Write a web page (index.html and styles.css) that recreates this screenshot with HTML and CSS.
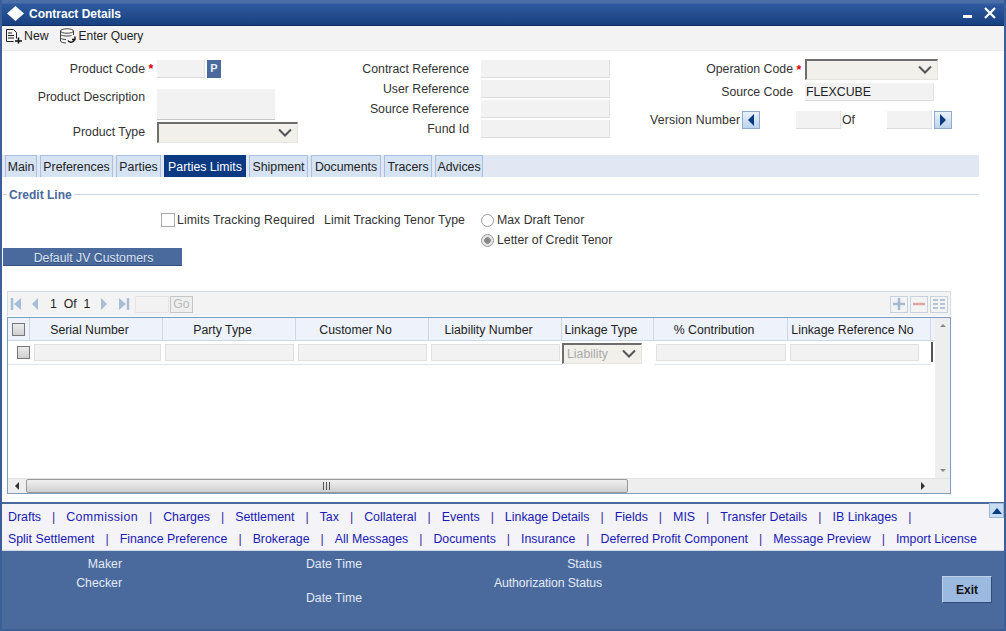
FILE: index.html
```html
<!DOCTYPE html>
<html lang="en">
<head>
<meta charset="utf-8">
<title>Contract Details</title>
<link rel="stylesheet" href="styles.css">
</head>
<body>
<div class="window">
  <header class="titlebar">
    <svg class="logo" width="17" height="15" viewBox="0 0 17 15"><path d="M8.500 0l8.500 7.500-8.500 7.500-8.500-7.500z" fill="#fff"/></svg>
    <span class="title">Contract Details</span>
    <svg class="winbtn min" width="12" height="12" viewBox="0 0 12 12"><rect x="1" y="8" width="9" height="3" fill="#fff"/></svg>
    <svg class="winbtn" width="14" height="14" viewBox="0 0 14 14"><path d="M2 2l10 10M12 2L2 12" stroke="#fff" stroke-width="2.2" fill="none"/></svg>
  </header>
  <nav class="toolbar">
    <span class="tool">
      <svg width="18" height="16" viewBox="0 0 18 16"><path d="M2.500 1.500h7l3 3v6" fill="none" stroke="#222"/><path d="M2.500 1.500v12h7" fill="none" stroke="#222"/><path d="M4 5h4M4 7.500h6M4 10h6" stroke="#222"/><path d="M14.500 9.500v6M11 13h7" stroke="#111" stroke-width="1.600"/></svg>
      New
    </span>
    <span class="tool query">
      <svg width="18" height="16" viewBox="0 0 18 16"><ellipse cx="8" cy="3" rx="6.500" ry="2.200" fill="#fff" stroke="#444"/><path d="M1.500 3v10c0 1 3 2 5.500 2M14.500 3v4M1.500 6.500c1 1.500 8 2 11 1M1.500 10c1 1 3 1.500 5.500 1.500" fill="none" stroke="#444"/><path d="M9 12.500a3.500 3.500 0 0 0 6.500-1.500M16 8.500v3h-3" fill="none" stroke="#111" stroke-width="1.400"/></svg>
      Enter Query
    </span>
  </nav>

  <section class="head">
    <div class="col-product">
      <label class="lbl">Product Code</label>
      <span class="req">*</span>
      <span class="prod-code"><span class="inp w48"></span><span class="pbtn">P</span></span>
      <label class="lbl lbl-desc">Product Description</label>
      <span></span>
      <span class="inp desc"></span>
      <label class="lbl lbl-type">Product Type</label>
      <span></span>
      <span class="select w141"><svg class="chev" width="16" height="10" viewBox="0 0 16 10"><path d="M2 1.500l6 6 6-6" fill="none" stroke="#555" stroke-width="2"/></svg></span>
    </div>
    <div class="col-ref">
      <label class="lbl">Contract Reference</label><span class="inp"></span>
      <label class="lbl">User Reference</label><span class="inp"></span>
      <label class="lbl">Source Reference</label><span class="inp"></span>
      <label class="lbl">Fund Id</label><span class="inp"></span>
    </div>
    <div class="col-op">
      <div class="op-row">
        <label class="lbl op-lbl">Operation Code</label><span class="req">*</span>
        <span class="select w133"><svg class="chev" width="16" height="10" viewBox="0 0 16 10"><path d="M2 1.500l6 6 6-6" fill="none" stroke="#555" stroke-width="2"/></svg></span>
      </div>
      <div class="op-row src">
        <label class="lbl">Source Code</label><span></span>
        <span class="inp w129 val">FLEXCUBE</span>
      </div>
      <div class="ver-row">
        <label class="lbl ver">Version Number</label>
        <span class="navbtn"><svg width="10" height="14" viewBox="0 0 10 14"><path d="M8 1v12L2 7z" fill="#0a3a80"/></svg></span>
        <span class="inp w45 ml36"></span>
        <span class="of">Of</span>
        <span class="inp w45 ml31"></span>
        <span class="navbtn ml2"><svg width="10" height="14" viewBox="0 0 10 14"><path d="M2 1v12l6-6z" fill="#0a3a80"/></svg></span>
      </div>
    </div>
  </section>

  <div class="tabs">
    <span class="tab">Main</span>
    <span class="tab">Preferences</span>
    <span class="tab">Parties</span>
    <span class="tab active">Parties Limits</span>
    <span class="tab">Shipment</span>
    <span class="tab">Documents</span>
    <span class="tab">Tracers</span>
    <span class="tab">Advices</span>
  </div>

  <main class="body">
    <div class="legend"><span class="legend-text">Credit Line</span></div>
    <div class="tracking">
      <span class="check"></span>
      <span class="txt ltr">Limits Tracking Required</span>
      <span class="txt lttt">Limit Tracking Tenor Type</span>
      <div class="radios">
        <div class="radio-row"><span class="radio"></span><span class="txt">Max Draft Tenor</span></div>
        <div class="radio-row"><span class="radio on"></span><span class="txt">Letter of Credit Tenor</span></div>
      </div>
    </div>
    <button class="jv" type="button">Default JV Customers</button>

    <div class="panel">
      <div class="pager">
        <svg width="12" height="12" viewBox="0 0 12 12"><path d="M2 0v12" stroke="#a9bcd6" stroke-width="2.500"/><path d="M11 0v12L4 6z" fill="#a9bcd6"/></svg>
        <svg class="pg-prev" width="8" height="12" viewBox="0 0 8 12"><path d="M7 0v12L1 6z" fill="#a9bcd6"/></svg>
        <span class="pg-text">1&nbsp; Of&nbsp; 1</span>
        <svg class="pg-next" width="8" height="12" viewBox="0 0 8 12"><path d="M1 0v12l6-6z" fill="#a9bcd6"/></svg>
        <svg class="pg-last" width="12" height="12" viewBox="0 0 12 12"><path d="M1 0v12l7-6z" fill="#a9bcd6"/><path d="M10 0v12" stroke="#a9bcd6" stroke-width="2.500"/></svg>
        <span class="inp pg-inp"></span>
        <span class="go">Go</span>
        <span class="pg-tools">
          <span class="ptool"><svg width="14" height="14" viewBox="0 0 14 14"><path d="M7 1v12M1 7h12" stroke="#a5b9d3" stroke-width="2.500"/></svg></span>
          <span class="ptool"><svg width="14" height="14" viewBox="0 0 14 14"><path d="M1 7h12" stroke="#e0a6a6" stroke-width="2.500"/></svg></span>
          <span class="ptool"><svg width="14" height="14" viewBox="0 0 14 14"><path d="M1 2h5v2H1zM8 2h5v2H8zM1 6h5v2H1zM8 6h5v2H8zM1 10h5v2H1zM8 10h5v2H8z" fill="#b6c4d8"/></svg></span>
        </span>
      </div>
      <div class="table-wrap">
        <div class="table-main">
          <div class="thead">
            <span class="th c0"><span class="check grey"></span></span>
            <span class="th c1">Serial Number</span>
            <span class="th c2">Party Type</span>
            <span class="th c3">Customer No</span>
            <span class="th c4">Liability Number</span>
            <span class="th c5">Linkage Type</span>
            <span class="th c6">% Contribution</span>
            <span class="th c7">Linkage Reference No</span>
          </div>
          <div class="trow">
            <span class="td c0"><span class="check grey"></span></span>
            <span class="td c1"><span class="inp cell"></span></span>
            <span class="td c2"><span class="inp cell"></span></span>
            <span class="td c3"><span class="inp cell"></span></span>
            <span class="td c4"><span class="inp cell"></span></span>
            <span class="td c5"><span class="select cell-select">Liability<svg class="chev" width="16" height="10" viewBox="0 0 16 10"><path d="M2 1.500l6 6 6-6" fill="none" stroke="#555" stroke-width="2"/></svg></span></span>
            <span class="td c6"><span class="inp cell"></span></span>
            <span class="td c7"><span class="inp cell"></span></span>
            <span class="td c8"></span>
          </div>
        </div>
        <div class="vscroll">
          <svg width="16" height="16" viewBox="0 0 16 16"><path d="M5 9l3-3 3 3z" fill="#888"/></svg>
          <svg width="16" height="16" viewBox="0 0 16 16"><path d="M5 7l3 3 3-3z" fill="#888"/></svg>
        </div>
        <div class="hscroll">
          <span class="harrow"><svg width="8" height="10" viewBox="0 0 8 10"><path d="M6 1v8L2 5z" fill="#333"/></svg></span>
          <span class="hthumb"><svg width="10" height="8" viewBox="0 0 10 8"><path d="M1.500 0v8M4.500 0v8M7.500 0v8" stroke="#555"/></svg></span>
          <span class="harrow end"><svg width="8" height="10" viewBox="0 0 8 10"><path d="M2 1v8l4-4z" fill="#333"/></svg></span>
        </div>
      </div>
    </div>
  </main>

  <section class="links">
    <div class="link-row first">
      <a>Drafts</a><i>|</i><a class="wide">Commission</a><i>|</i><a>Charges</a><i>|</i><a>Settlement</a><i>|</i><a>Tax</a><i>|</i><a>Collateral</a><i>|</i><a>Events</a><i>|</i><a>Linkage Details</a><i>|</i><a>Fields</a><i>|</i><a>MIS</a><i>|</i><a>Transfer Details</a><i>|</i><a>IB Linkages</a><i>|</i>
    </div>
    <div class="link-row">
      <a>Split Settlement</a><i>|</i><a>Finance Preference</a><i>|</i><a>Brokerage</a><i>|</i><a>All Messages</a><i>|</i><a>Documents</a><i>|</i><a>Insurance</a><i>|</i><a>Deferred Profit Component</a><i>|</i><a>Message Preview</a><i>|</i><a>Import License</a>
    </div>
    <span class="collapse"><svg width="12" height="8" viewBox="0 0 12 8"><path d="M6 1l5 6H1z" fill="#0a3a80"/></svg></span>
  </section>

  <footer class="footer">
    <div class="audit">
      <span class="a-maker">Maker</span>
      <span class="a-dt1">Date Time</span>
      <span class="a-status">Status</span>
      <span class="a-checker">Checker</span>
      <span class="a-auth">Authorization Status</span>
      <span class="a-dt2">Date Time</span>
    </div>
    <button class="exit" type="button">Exit</button>
  </footer>
</div>
</body>
</html>
```
FILE: styles.css
```css
* { box-sizing: border-box; }
html, body { margin: 0; padding: 0; }
body {
  width: 1006px;
  height: 631px;
  overflow: hidden;
  background: #fff;
  font-family: "Liberation Sans", Arial, sans-serif;
  font-size: 12.3px;
  color: #333;
}
.window {
  width: 1006px;
  height: 631px;
  display: flex;
  flex-direction: column;
  border-left: 2px solid #3d5f97;
  border-right: 2px solid #3d5f97;
  border-bottom: 2px solid #3d5f97;
}
.titlebar {
  height: 26px;
  flex: none;
  display: flex;
  align-items: center;
  padding: 2px 7px 0 5px;
  background: linear-gradient(#4a6ea8 0, #4a6ea8 3px, #2f5a9f 4px, #17407f 100%);
  border-bottom: 1px solid #0f2f63;
  color: #fff;
}
.logo { flex: none; margin-top: -1px; }
.title { margin-left: 5px; font-size: 12px; font-weight: bold; color: #fff; flex: 1; }
.winbtn { flex: none; margin-top: -2px; }
.winbtn.min { margin-right: 9px; }
.toolbar {
  height: 25px;
  flex: none;
  display: flex;
  align-items: center;
  gap: 10px;
  padding: 0 0 4px 2px;
  background: #f3f3f3;
  border-bottom: 1px solid #ececec;
  color: #222;
}
.tool { display: flex; align-items: center; gap: 2px; }
.tool.query { font-size: 12px; }

.head {
  height: 104px;
  flex: none;
  display: flex;
  padding-top: 9px;
}
.lbl { text-align: right; color: #333; white-space: nowrap; line-height: 18px; }
.req { color: #d00; font-weight: bold; }
.inp {
  display: block;
  height: 18px;
  background: #f2f2f2;
  border-bottom: 1px solid #dcdcdc;
  border-right: 1px solid #e2e2e2;
  color: #222;
}
.select {
  display: flex;
  align-items: center;
  justify-content: flex-end;
  height: 21px;
  background: #f1f0ea;
  border-top: 2px solid #6d6d6d;
  border-left: 2px solid #6d6d6d;
  border-right: 1px solid #e4e4e0;
  border-bottom: 1px solid #e4e4e0;
  padding-right: 4px;
}
.chev { flex: none; }

.col-product {
  width: 296px;
  display: grid;
  grid-template-columns: 143px 12px 1fr;
  grid-template-rows: 29px 33px 21px;
  align-items: start;
  justify-items: start;
}
.col-product .lbl { justify-self: end; }
.col-product .req { justify-self: center; line-height: 18px; }
.col-product .lbl-desc { line-height: 16px; }
.col-product .lbl-type { line-height: 20px; }
.prod-code { display: flex; gap: 2px; align-items: center; }
.w48 { width: 48px; }
.pbtn {
  width: 14px;
  height: 18px;
  background: #4a6a9e;
  color: #e8eef8;
  font-weight: bold;
  font-size: 11px;
  text-align: center;
  line-height: 17px;
}
.desc { width: 118px; height: 31px; border-right: 0; border-bottom: 1px solid #c8c8c8; }
.w141 { width: 141px; }

.col-ref {
  width: 312px;
  display: grid;
  grid-template-columns: 171px 129px;
  column-gap: 12px;
  grid-auto-rows: 18px;
  row-gap: 2px;
  align-items: center;
  align-content: start;
}
.col-op { width: 340px; margin-left: 40px; margin-top: -1px; }
.op-row { display: grid; grid-template-columns: 143px 12px auto; align-items: center; height: 21px; justify-content: start; }
.op-row .req { justify-self: center; }
.op-lbl { line-height: 19px; }
.op-row.src { margin-top: 3px; height: 18px; }
.w133 { width: 133px; }
.w129 { width: 129px; }
.val { padding-left: 1px; line-height: 18px; color: #222; }
.ver-row { display: flex; align-items: center; height: 18px; margin-top: 10px; }
.ver { color: #333; width: 90px; letter-spacing: .15px; line-height: 20px; }
.navbtn {
  width: 18px;
  height: 18px;
  margin-left: 2px;
  background: linear-gradient(#eaf2fb, #bcd3ec);
  border: 1px solid #8fabcc;
  display: flex;
  align-items: center;
  justify-content: center;
}
.w45 { width: 45px; }
.ml36 { margin-left: 36px; }
.of { width: 16px; margin-left: 1px; line-height: 20px; }
.ml31 { margin-left: 29px; }
.ml2 { margin-left: 2px; }

.tabs {
  width: 977px;
  height: 22px;
  flex: none;
  display: grid;
  grid-template-columns: 32px 73px 45px 82px 59px 70px 48px 48px;
  column-gap: 3px;
  padding-left: 3px;
  background: #e1e8f4;
}
.tab {
  height: 22px;
  line-height: 23px;
  text-align: center;
  color: #222;
  background: #d6e3f4;
  border: 1px solid #a9c1de;
  border-bottom: 0;
  white-space: nowrap;
}
.tab.active { background: #0b3a82; color: #fff; border-color: #0b3a82; }

.body { flex: 1; min-height: 0; display: flex; flex-direction: column; }
.legend {
  margin: 11px 25px 0 1px;
  height: 14px;
  display: flex;
  align-items: center;
  flex: none;
}
.legend::before { content: ""; width: 4px; height: 1px; background: #cdd8e6; margin-top: -1px; }
.legend::after { content: ""; flex: 1; height: 1px; background: #cdd8e6; margin-top: -1px; }
.legend-text { font-size: 12px; font-weight: bold; color: #4a6a9e; padding: 0 2px; }
.tracking { display: flex; margin: 11px 0 0 159px; align-items: flex-start; flex: none; }
.check {
  display: block;
  flex: none;
  width: 14px;
  height: 14px;
  border: 1px solid #aaa;
  background: #fff;
}
.check.grey { width: 13px; height: 13px; background: linear-gradient(#ececec, #cfcfcf); border-color: #777; }
.txt { white-space: nowrap; line-height: 14px; }
.ltr { margin-left: 2px; width: 138px; letter-spacing: .1px; }
.lttt { margin-left: 9px; width: 141px; letter-spacing: .05px; }
.radios { margin-left: 16px; display: flex; flex-direction: column; gap: 6px; }
.radio-row { display: flex; align-items: center; gap: 3px; height: 14px; }
.radio { width: 13px; height: 13px; border-radius: 50%; border: 1px solid #999; background: #fff; flex: none; }
.radio.on { background: radial-gradient(circle, #888 0 3px, #e6e6e6 3.500px); }
.jv {
  flex: none;
  width: 179px;
  height: 18px;
  margin: 1px 0 0 1px;
  padding: 2px 0 0 2px;
  border: 0;
  border-bottom: 1px solid #30507f;
  background: #4a6a9e;
  color: #dbe4f2;
  text-shadow: 0 1px 0 rgba(30, 50, 90, .5);
  font: 12.3px "Liberation Sans", Arial, sans-serif;
}
.panel { margin: 25px 0 0 5px; width: 944px; flex: none; }
.pager {
  height: 25px;
  display: flex;
  align-items: center;
  padding: 0 2px 0 2px;
  background: #f3f3f3;
  border: 1px solid #d3dbe7;
  border-bottom: 0;
  color: #222;
}
.pg-prev { margin-left: 9px; }
.pg-text { margin-left: 11px; width: 37px; white-space: nowrap; }
.pg-next { margin-left: 13px; }
.pg-last { margin-left: 10px; }
.pg-inp { width: 34px; height: 17px; margin-left: 5px; border: 1px solid #e4e4e4; }
.go {
  width: 23px;
  height: 17px;
  margin-left: 1px;
  border: 1px solid #c5c5c5;
  background: #eee;
  color: #bbb;
  text-align: center;
  line-height: 15px;
}
.pg-tools { margin-left: auto; display: flex; gap: 2px; }
.ptool {
  width: 18px;
  height: 17px;
  border: 1px solid #c5d2e2;
  background: #f3f3f3;
  display: flex;
  align-items: center;
  justify-content: center;
}
.table-wrap {
  position: relative;
  margin-top: 1px;
  height: 177px;
  border: 1px solid #7e9cc0;
  display: grid;
  grid-template-columns: 927px 15px;
  grid-template-rows: 160px 15px;
}
.table-main { overflow: hidden; }
.thead, .trow { display: grid; grid-template-columns: 22px 133px 133px 133px 133px 92px 134px 143px 6px; }
.thead { height: 23px; background: #eef2fb; border-bottom: 1px solid #cdd8e6; }
.th {
  display: flex;
  align-items: center;
  justify-content: center;
  padding: 1px 13px 0 0;
  border-right: 1px solid #cdd8e6;
  color: #222;
  white-space: nowrap;
}
.th.c0 { padding: 0; }
.trow { height: 24px; }
.td { display: flex; align-items: center; padding: 0 2px; border-bottom: 1px solid #dfe6f0; }
.td.c0 { padding-left: 9px; }
.cell { width: 100%; height: 17px; border: 1px solid #e0e0e0; }
.td.c1 { padding-left: 4px; }
.td.c7 { padding-right: 12px; }
.cell-select { width: 80px; height: 21px; margin-top: 1px; color: #aaa; justify-content: space-between; padding-left: 3px; }
.td.c5 { padding-left: 0; border-bottom: 0; }
.td.c8 { border-left: 2px solid #555; border-bottom: 0; height: 20px; padding: 0; margin-top: 1px; }
.vscroll {
  grid-column: 2;
  grid-row: 1;
  background: #eee;
  display: flex;
  flex-direction: column;
  justify-content: space-between;
}
.hscroll {
  grid-column: 1 / span 2;
  grid-row: 2;
  display: flex;
  background: #eee;
  border-top: 1px solid #e2e2e2;
}
.harrow { width: 18px; display: flex; align-items: center; justify-content: center; flex: none; }
.harrow.end { margin-left: 286px; }
.hthumb {
  width: 602px;
  background: linear-gradient(#f0f0f0, #cfcfcf);
  border: 1px solid #999;
  border-radius: 2px;
  display: flex;
  align-items: center;
  justify-content: center;
}

.links {
  position: relative;
  height: 49px;
  flex: none;
  background: #f3f3f8;
  border-top: 2px solid #4a6a9e;
  border-bottom: 1px solid #cdd8e6;
  padding: 2px 0 0 6px;
  font-size: 12.35px;
}
.link-row { display: flex; height: 21px; align-items: center; white-space: nowrap; }
.link-row.first { margin-bottom: 1px; font-size: 12.4px; }
.link-row a { color: #1a1ab4; }
.link-row a.wide { letter-spacing: .35px; }
.link-row i { font-style: normal; color: #3a2aa0; margin: 0 11px; }
.collapse {
  position: absolute;
  right: 0;
  top: -1px;
  width: 15px;
  height: 15px;
  background: #c8dcf2;
  border: 1px solid #9bb8d8;
  display: flex;
  align-items: center;
  justify-content: center;
}
.footer {
  flex: none;
  height: 78px;
  background: #4a6a9e;
  display: flex;
  color: #e3eaf5;
}
.audit {
  width: 600px;
  display: grid;
  grid-template-columns: 120px 240px 1fr;
  grid-template-rows: 19px 15px 15px;
  padding-top: 6px;
  height: 70px;
}
.a-maker { grid-column: 1; grid-row: 1; text-align: right; }
.a-dt1 { grid-column: 2; grid-row: 1; justify-self: end; }
.a-status { grid-column: 3; grid-row: 1; text-align: right; }
.a-checker { grid-column: 1; grid-row: 2; text-align: right; }
.a-auth { grid-column: 3; grid-row: 2; text-align: right; letter-spacing: -.1px; }
.a-dt2 { grid-column: 2; grid-row: 3; justify-self: end; }
.exit {
  width: 50px;
  height: 27px;
  margin: 25px 0 0 340px;
  background: #9cb9e0;
  border: 1px solid #bcd0ea;
  border-right-color: #2f4c7a;
  border-bottom-color: #2f4c7a;
  color: #111;
  font: bold 12px "Liberation Sans", Arial, sans-serif;
  padding: 0;
}
```
